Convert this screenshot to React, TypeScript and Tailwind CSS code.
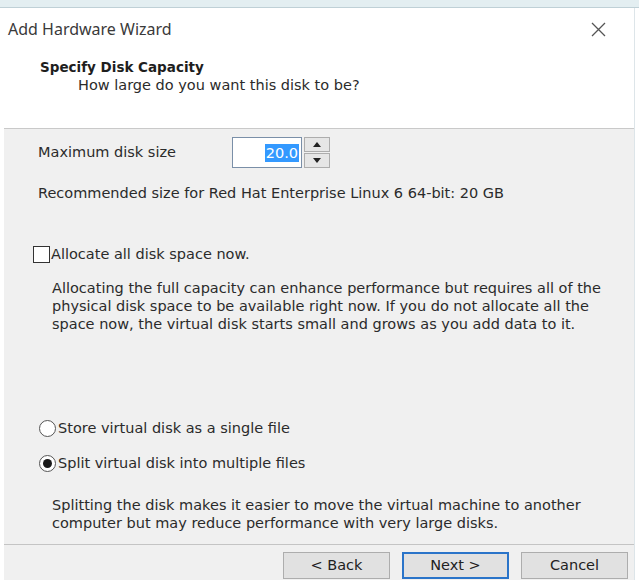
import React from 'react';

const body = "font-['DejaVu_Sans',sans-serif] text-[14.5px] text-[#2b2b2b]";

const Radio = ({ checked }: { checked?: boolean }) => (
  <span className="flex h-[17px] w-[17px] items-center justify-center rounded-full border border-[#555] bg-white">
    {checked && <span className="h-[9px] w-[9px] rounded-full bg-[#1a1a1a]" />}
  </span>
);

const WizardButton = ({ label, primary }: { label: string; primary?: boolean }) => (
  <button
    className={`h-[27px] w-[107px] bg-[#e1e1e1] text-[#222] ${
      primary ? 'border-2 border-[#2a74c9]' : 'border border-[#adadad]'
    }`}
  >
    {label}
  </button>
);

export default function App() {
  return (
    <div className="h-[581px] w-[639px] overflow-hidden bg-white">
      {/* strip of the window behind */}
      <div className="h-[8px] border-b border-[#bfd0d6] bg-[#e3eef1]" />

      <div className="ml-[4px] mr-[4px] flex h-[572px] flex-col border-r border-[#dde5e9]">
        {/* title bar */}
        <div className="flex h-[42px] items-center justify-between bg-white pl-[4px] pr-[28px]">
          <span className="font-['Noto_Sans',sans-serif] text-[16px] text-[#3a3a3a]">Add Hardware Wizard</span>
          <svg width="15" height="15" viewBox="0 0 15 15" className="text-[#555]">
            <path d="M1 1L14 14M14 1L1 14" stroke="currentColor" strokeWidth="1.3" />
          </svg>
        </div>

        {/* page header */}
        <div className={`${body} h-[78px] bg-white pt-[8px]`}>
          <div className="pl-[36px] text-[13.5px] font-bold leading-[18px] text-[#1e1e1e]">Specify Disk Capacity</div>
          <div className="pl-[74px] leading-[18px]">How large do you want this disk to be?</div>
        </div>

        <div className={`${body} flex flex-1 flex-col border-t border-[#c9c9c9] bg-[#f0f0f0]`}>
          <div className="ml-[34px] mt-[8px] flex h-[31px] items-center">
            <span className="w-[194px]">Maximum disk size</span>
            <div className="flex h-[31px] w-[70px] items-center justify-end border border-[#7a8fa8] bg-white pr-[2px]">
              <span className="bg-[#3399ff] px-[1px] leading-[18px] text-white">20.0</span>
            </div>
            <div className="ml-[2px] flex h-[31px] w-[26px] flex-col gap-[1px]">
              <span className="flex flex-1 items-center justify-center border border-[#adadad] bg-[#e6e6e6]">
                <svg width="8" height="5" viewBox="0 0 8 5"><path d="M0 5L4 0L8 5Z" fill="#222" /></svg>
              </span>
              <span className="flex flex-1 items-center justify-center border border-[#adadad] bg-[#e6e6e6]">
                <svg width="8" height="5" viewBox="0 0 8 5"><path d="M0 0L4 5L8 0Z" fill="#222" /></svg>
              </span>
            </div>
          </div>

          <div className="ml-[34px] mt-[16px] leading-[18px]">
            Recommended size for Red Hat Enterprise Linux 6 64-bit: 20 GB
          </div>

          <div className="ml-[29px] mt-[43px] flex items-center leading-[18px]">
            <span className="mr-[1px] h-[17px] w-[17px] border border-[#333] bg-white" />
            <span>Allocate all disk space now.</span>
          </div>

          <div className="ml-[48px] mt-[16px] leading-[18px]">
            <div>Allocating the full capacity can enhance performance but requires all of the</div>
            <div>physical disk space to be available right now. If you do not allocate all the</div>
            <div>space now, the virtual disk starts small and grows as you add data to it.</div>
          </div>

          <div className="ml-[35px] mt-[86px] flex items-center gap-[2px] leading-[18px]">
            <Radio />
            <span>Store virtual disk as a single file</span>
          </div>
          <div className="ml-[35px] mt-[17px] flex items-center gap-[2px] leading-[18px]">
            <Radio checked />
            <span>Split virtual disk into multiple files</span>
          </div>

          <div className="ml-[48px] mt-[24px] leading-[18px]">
            <div>Splitting the disk makes it easier to move the virtual machine to another</div>
            <div>computer but may reduce performance with very large disks.</div>
          </div>
        </div>

        {/* buttons */}
        <div className={`${body} flex h-[36px] shrink-0 items-start justify-end gap-[12px] border-t border-[#c4c4c4] bg-[#f0f0f0] pr-[6px] pt-[7px]`}>
          <WizardButton label="< Back" />
          <WizardButton label="Next >" primary />
          <WizardButton label="Cancel" />
        </div>
      </div>
    </div>
  );
}
